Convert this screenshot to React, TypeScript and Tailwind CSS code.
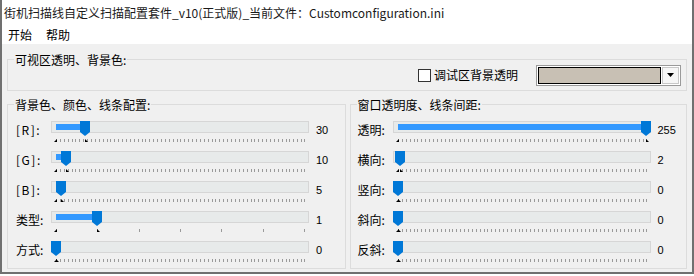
import React from 'react';

type Row = { label: string; value: number; max: number; freq: number };

const leftRows: Row[] = [
  { label: '[R]:', value: 30, max: 255, freq: 4 },
  { label: '[G]:', value: 10, max: 255, freq: 4 },
  { label: '[B]:', value: 5, max: 255, freq: 4 },
  { label: '类型:', value: 1, max: 6, freq: 1 },
  { label: '方式:', value: 0, max: 255, freq: 4 },
];

const rightRows: Row[] = [
  { label: '透明:', value: 255, max: 255, freq: 4 },
  { label: '横向:', value: 2, max: 255, freq: 4 },
  { label: '竖向:', value: 0, max: 255, freq: 4 },
  { label: '斜向:', value: 0, max: 255, freq: 4 },
  { label: '反斜:', value: 0, max: 255, freq: 4 },
];

const TRACK_W = 258;
const RANGE = 248;

function Slider({ value, max, freq }: Row) {
  const px = (v: number) => 5 + (v / max) * RANGE;
  const pos = px(value);
  const ticks: number[] = [];
  for (let t = 0; t < max; t += freq) ticks.push(t);
  ticks.push(max);
  const s = Math.round(px(0));
  const m = Math.round(pos);

  return (
    <div className="relative w-[258px] h-[21px]">
      <div className="h-[12px] border border-[#d6d6d6] bg-[#e7eaea]" />
      <svg className="block mt-[5px]" width={TRACK_W} height={4}>
        {ticks.map((t) => {
          const x = Math.round(px(t)) + 0.5;
          return <line key={t} x1={x} x2={x} y1={1} y2={4} stroke="#9a9a9a" strokeWidth={1} />;
        })}
        <polygon points={`${s - 2},4 ${s + 1},1 ${s + 1},4`} fill="#000" />
        <polygon points={`${m},1 ${m},4 ${m + 3},4`} fill="#000" />
      </svg>
      {value > 0 && (
        <div className="absolute top-[3px] left-[5px] h-[6px] bg-[#3399ff]" style={{ width: pos - 5 }} />
      )}
      <svg className="absolute top-0" style={{ left: Math.round(pos) - 5 }} width={10} height={15}>
        <path d="M0 0H10V11L5 15L0 11Z" fill="#0078d7" />
      </svg>
    </div>
  );
}

function Group({ title, rows, pad }: { title: string; rows: Row[]; pad: string }) {
  return (
    <div className={`relative flex-1 h-[165px] border border-[#dcdcdc] pt-[16px] ${pad}`}>
      <span className="absolute -top-[8px] left-[6px] px-[1px] bg-[#f0f0f0] leading-[16px]">{title}</span>
      <div className="flex flex-col gap-[9px]">
        {rows.map((r) => (
          <div key={r.label} className="flex items-start">
            <div
              className={`w-[35px] leading-[16px] mt-[1px] shrink-0 ${
                r.label.startsWith('[') ? 'tracking-[1.5px]' : ''
              }`}
            >
              {r.label}
            </div>
            <Slider {...r} />
            <div className="ml-[7px] mt-[1px] leading-[16px] text-[11px] font-['Liberation_Sans',sans-serif]">
              {r.value}
            </div>
          </div>
        ))}
      </div>
    </div>
  );
}

export default function App() {
  return (
    <div className="w-[694px] h-[276px] bg-white">
      <div className="h-[274px] border-x-2 border-b-2 border-[#707070] bg-[#f0f0f0] text-[12px] text-black font-['Noto_Sans_CJK_SC',sans-serif] flex flex-col">
        {/* 标题栏 */}
        <div className="h-[26px] bg-white flex items-center pl-[2px] text-[#1a1a1a]">
          街机扫描线自定义扫描配置套件_v10(正式版)_当前文件：Customconfiguration.ini
        </div>
        {/* 菜单 */}
        <div className="h-[18px] bg-white flex items-center gap-[14px] pl-[6px]">
          <span>开始</span>
          <span>帮助</span>
        </div>

        <div className="px-[5px]">
          {/* 可视区 */}
          <div className="relative mt-[15px] h-[32px] border border-[#dcdcdc] flex items-center justify-end pr-[5px]">
            <span className="absolute -top-[8px] left-[6px] px-[1px] bg-[#f0f0f0] leading-[16px]">
              可视区透明、背景色:
            </span>
            <label className="flex items-center gap-[3px]">
              <span className="w-[13px] h-[13px] border border-[#333] bg-white" />
              <span className="leading-[16px]">调试区背景透明</span>
            </label>
            <div className="ml-[18px] w-[145px] h-[21px] border border-[#9a9a9a] bg-white flex p-[1px] gap-[1px]">
              <div className="flex-1 border border-black bg-[#c8c0b4]" />
              <div className="w-[17px] border border-[#c8c8c8] bg-[#f6f6f6] flex items-center justify-center">
                <svg width={7} height={4}>
                  <path d="M0 0H7L3.5 4Z" fill="#000" />
                </svg>
              </div>
            </div>
          </div>

          {/* 配置 */}
          <div className="mt-[13px] flex gap-[4px]">
            <Group title="背景色、颜色、线条配置:" rows={leftRows} pad="pl-[8px]" />
            <Group title="窗口透明度、线条间距:" rows={rightRows} pad="pl-[7px]" />
          </div>
        </div>
      </div>
    </div>
  );
}
